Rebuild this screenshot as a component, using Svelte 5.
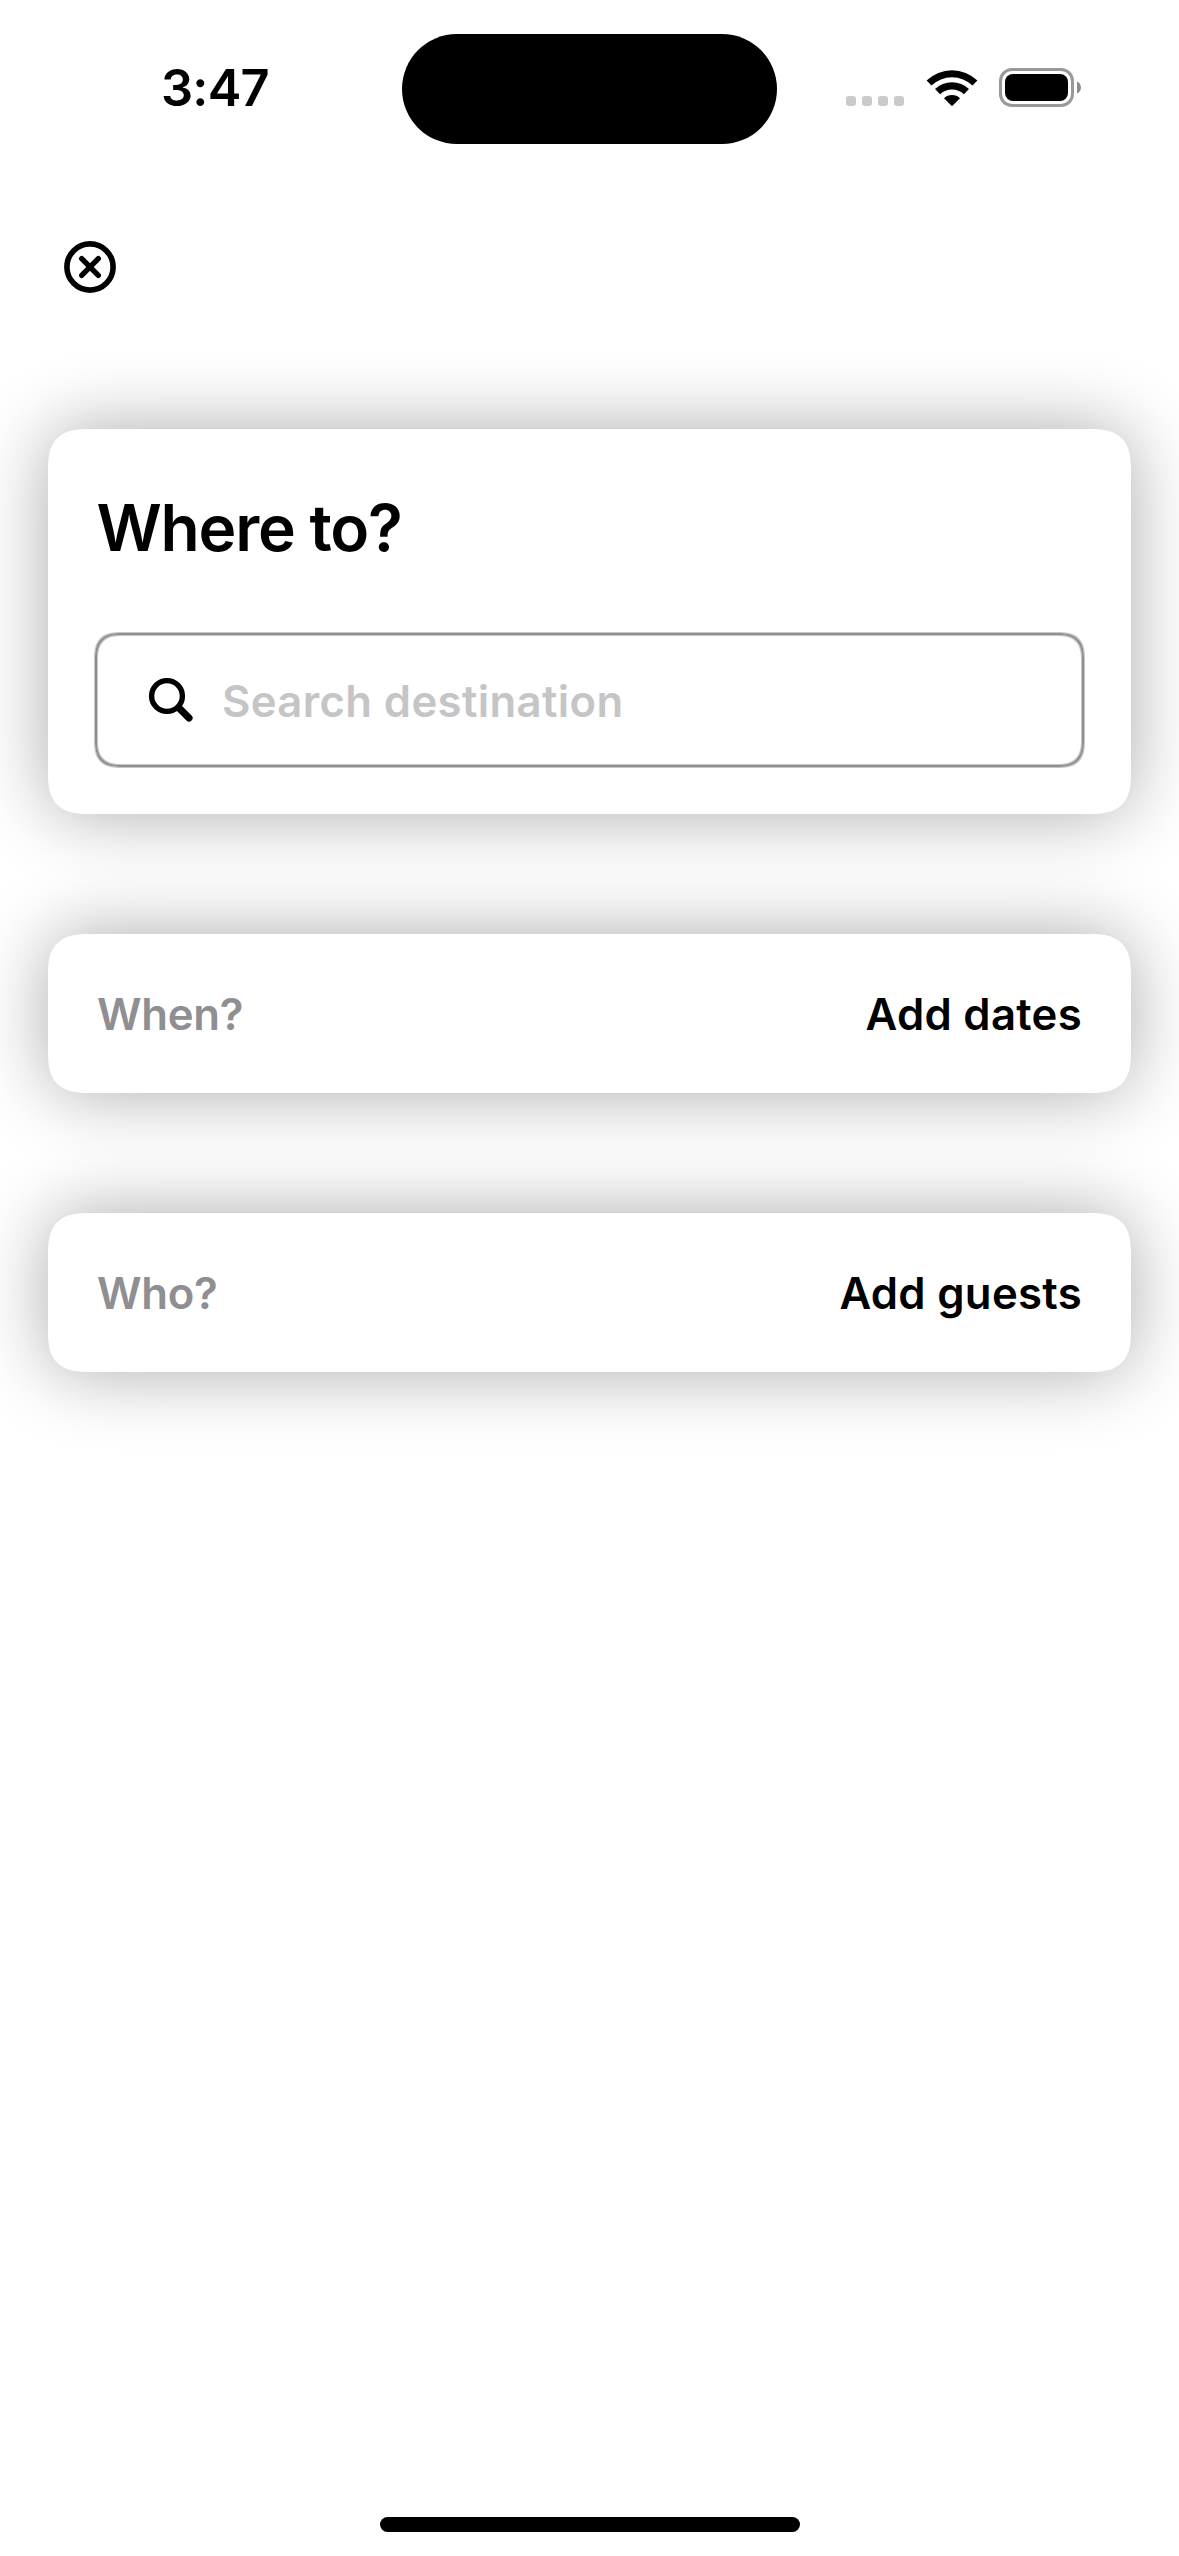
<script>
  const rows = [
    { label: 'When?', action: 'Add dates', name: 'dates' },
    { label: 'Who?', action: 'Add guests', name: 'guests' }
  ];
</script>

<div class="screen">
  <header class="status">
    <span class="time">3:47</span>
    <div class="island"></div>
    <div class="indicators">
      <svg class="cell" viewBox="0 0 58 10" aria-hidden="true">
        {#each [0, 16, 32, 48] as x}
          <rect {x} y="0" width="10" height="10" rx="3" />
        {/each}
      </svg>
      <svg class="wifi" viewBox="0 0 52 38" aria-hidden="true">
        <path d="M0.6 11.6A36.6 36.6 0 0 1 51.4 11.6L46.5 16.5A29.6 29.6 0 0 0 5.5 16.5Z" />
        <path d="M9 20A25 25 0 0 1 43 20L37.8 25.2A17.3 17.3 0 0 0 14.2 25.2Z" />
        <path d="M18 29.2A11.8 11.8 0 0 1 34 29.2L26 37.3Z" />
      </svg>
      <svg class="battery" viewBox="0 0 82 39" aria-hidden="true">
        <rect x="1.5" y="1.5" width="72" height="36" rx="11.5" fill="none" stroke="#999" stroke-width="3" />
        <rect x="6" y="6" width="63" height="27" rx="8" />
        <path d="M78 13.5C83.3 15.7 83.3 23.3 78 25.5Z" fill="#8c8c8c" />
      </svg>
    </div>
  </header>

  <nav class="toolbar">
    <svg class="close" viewBox="0 0 52 52" role="img" aria-label="Close">
      <circle cx="26" cy="26" r="23.1" stroke-width="5.6" />
      <path d="M17.7 17.7L34.3 34.3M34.3 17.7L17.7 34.3" stroke-width="5.4" />
    </svg>
  </nav>

  <main class="cards">
    <section class="card where">
      <h1>Where to?</h1>
      <div class="field">
        <svg class="glass" viewBox="0 0 46 46" aria-hidden="true">
          <circle cx="19" cy="19" r="15.4" stroke-width="5.4" />
          <path d="M31 31L41 41" stroke-width="7.2" />
        </svg>
        <span class="placeholder">Search destination</span>
      </div>
    </section>
    {#each rows as row}
      <section class="card row {row.name}">
        <span class="label">{row.label}</span>
        <span class="action">{row.action}</span>
      </section>
    {/each}
  </main>

  <footer class="home"><div class="bar"></div></footer>
</div>

<style>
  :global(body) { margin: 0; background: #fff; }
  .screen {
    display: flex;
    flex-direction: column;
    width: 1179px;
    height: 2556px;
    overflow: hidden;
    background: #fff;
    color: #000;
    font-family: Inter, "Liberation Sans", sans-serif;
    font-weight: 600;
  }
  .status {
    display: grid;
    grid-template-columns: 402px 375px 402px;
    height: 111px;
    padding-top: 33.5px;
  }
  .time {
    padding: 24px 0 0 161px;
    font-size: 50.5px;
    line-height: 60px;
    letter-spacing: -0.8px;
    white-space: nowrap;
  }
  .island { height: 110.5px; border-radius: 56px; background: #000; }
  .indicators {
    display: flex;
    align-items: flex-start;
    padding: 34.5px 0 0 69px;
  }
  .cell { width: 58px; height: 10px; margin: 28px 22px 0 0; fill: #cbcbcb; }
  .wifi { width: 52px; height: 38px; margin: 1px 21px 0 0; }
  .battery { width: 82px; height: 39px; }
  .toolbar {
    box-sizing: border-box;
    flex: none;
    height: 284.5px;
    padding: 96.5px 0 0 64px;
  }
  .close { display: block; width: 52px; height: 52px; fill: none; stroke: #000; stroke-linecap: round; }
  .cards {
    display: flex;
    flex-direction: column;
    padding: 0 48px;
  }
  .card {
    box-sizing: border-box;
    border-radius: 32px;
    background: #fff;
    box-shadow: 0 0 74px rgba(0, 0, 0, 0.335);
  }
  @supports (corner-shape: superellipse(1.44)) {
    .card { border-radius: 41px; corner-shape: superellipse(1.44); }
    .field { border-radius: 33px; corner-shape: superellipse(1.44); }
  }
  .where {
    height: 385px;
    padding: 59px 47px 0;
    margin-bottom: 120px;
  }
  h1 {
    margin: 0 0 65px 1.5px;
    font-size: 64px;
    line-height: 80px;
    font-weight: 600;
    letter-spacing: -1.2px;
  }
  .field {
    box-sizing: border-box;
    display: flex;
    align-items: center;
    width: 989px;
    height: 134px;
    padding-left: 51px;
    border: 2px solid #8e8e93;
    border-radius: 27px;
    box-shadow: 0 0 0 1px rgba(142, 142, 147, 0.5), inset 0 0 0 1px rgba(142, 142, 147, 0.5);
  }
  .glass { width: 46px; height: 46px; margin-right: 28px; fill: none; stroke: #000; stroke-linecap: round; }
  .placeholder {
    padding-top: 3px;
    color: #c5c5c7;
    font-size: 43.7px;
    line-height: 54px;
    letter-spacing: 0.35px;
    white-space: nowrap;
  }
  .row {
    display: flex;
    align-items: center;
    justify-content: space-between;
    height: 159px;
    padding: 3px 49px 0;
    font-size: 43.7px;
    line-height: 54px;
  }
  .dates { margin-bottom: 120px; }
  .label { color: #8e8e93; letter-spacing: -0.3px; }
  .action { letter-spacing: 0.3px; }
  .home { margin-top: auto; padding-bottom: 24px; }
  .bar { width: 420px; height: 15px; margin: 0 auto; border-radius: 8px; background: #000; }
</style>
